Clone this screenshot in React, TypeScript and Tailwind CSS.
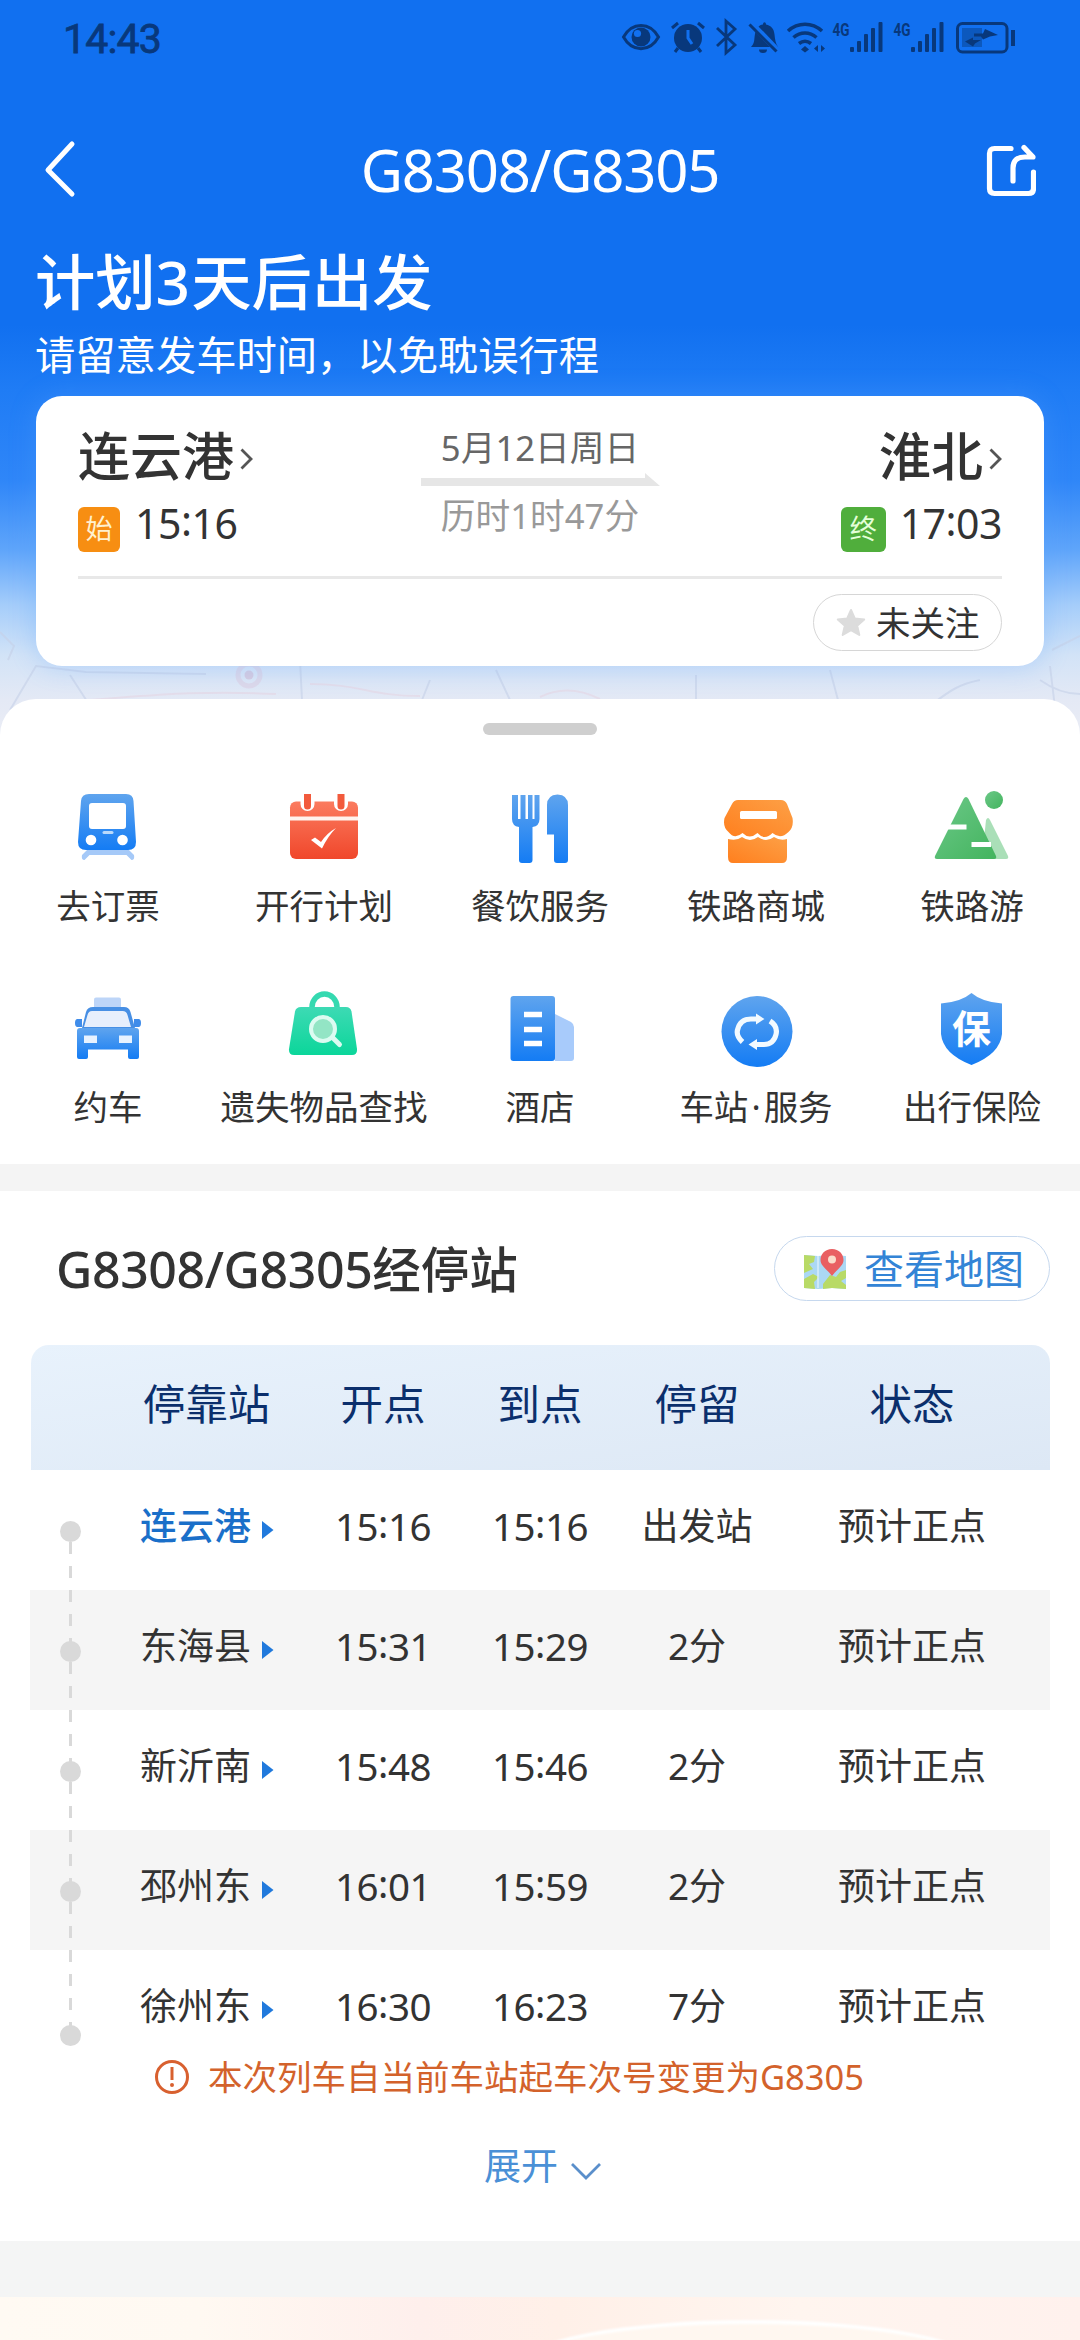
import React from "react";

type Children = { children: React.ReactNode };

/* Latin runs are tracked separately from the Chinese text around them. */
const N = ({ children, t = "tracking-[-0.02em]" }: Children & { t?: string }) => <span className={t}>{children}</span>;

/* A clock time whose colon is centred on the digits. */
const Time = ({ value }: { value: string }) => {
  const [h, m] = value.split(":");
  return (
    <span className="tracking-[-0.012em]">
      {h}
      <span className="inline-block -translate-y-[0.08em]">:</span>
      {m}
    </span>
  );
};

const INK = "#08387c";

const StatusBar = () => (
  <div className="flex h-[74px] items-center justify-between pr-[63px] pl-[63px]">
    <div className="mt-[5px] font-['Roboto'] text-[41px] leading-[41px] font-normal tracking-[-0.02em] text-[#08387c] [-webkit-text-stroke:0.8px_#08387c]">14:43</div>
    <svg className="h-[40px] w-[396px]" viewBox="622 17 396 40" fill="none" stroke={INK} strokeWidth="3">
      <path d="M624.500 37C633 21.500 651 21.500 659.500 37C651 52.500 633 52.500 624.500 37Z" />
      <circle cx="642" cy="37" r="9.500" fill={INK} stroke="none" />
      <circle cx="638.500" cy="33.500" r="3.600" fill="#1170f0" stroke="none" />
      <circle cx="689" cy="38" r="14" fill={INK} stroke="none" />
      <path d="M673 28l6-5M705 28l-6-5M679 48l-3 4M699 48l3 4" />
      <path d="M689 30v8l4 6" stroke="#1170f0" />
      <path d="M718 28l18 17-9 8V21l9 8-18 17" strokeWidth="2.800" />
      <path d="M752 47c4-4 3-8 4-13c1-6 4-9 8-9.500c0-3 3-3 3 0c5 1 8 4 8.500 10c.5 5 1 9 3.500 12.500zM760 49.500h8a4 3.500 0 0 1-8 0Z" fill={INK} stroke="none" />
      <path d="M752 23l28 29" stroke="#1170f0" strokeWidth="6" />
      <path d="M750.500 24.500l27 27" />
      <path d="M789 31c10-9 24-9 34 0M794.500 37.500c7-6 16-6 23 0M800 43.500c4-3 8-3 12 0" strokeWidth="3.600" />
      <path d="M806 46l4 3.500-4 3-4-3Z" fill={INK} stroke="none" />
      <path d="M819 45v7l-4-3.500zM822 45v7l4-3.500z" fill={INK} stroke="none" />
      {[851, 912].map((x) => (
        <g key={x} fill={INK} stroke="none">
          <text x={x - 17.500} y="35.500" fontFamily="Roboto" fontWeight="700" fontSize="17.500" textLength="17" lengthAdjust="spacingAndGlyphs">4G</text>
          <rect x={x} y="47" width="4" height="5" rx="1" />
          <rect x={x + 7} y="41" width="4" height="11" rx="1" />
          <rect x={x + 14} y="34" width="4" height="18" rx="1" />
          <rect x={x + 21} y="28" width="4" height="24" rx="1" />
          <rect x={x + 28.500} y="22" width="4" height="30" rx="1" />
        </g>
      ))}
      <rect x="958.500" y="23.500" width="49.500" height="28.500" rx="5" />
      <rect x="963" y="28" width="20" height="19" fill="#0c58bd" stroke="none" />
      <path d="M975 33.500h9l2-4.500 13 6-8 1.500-7 3-2-3h-7zM966 41.500l8-4v2.500h8l-6 3.500-2 3z" fill={INK} stroke="none" />
      <path d="M1014 30v16" strokeWidth="4" />
    </svg>
  </div>
);

const NavBar = () => (
  <div className="mt-[60px] flex h-[72px] items-center justify-between px-[44px]">
    <svg className="h-[60px] w-[50px]" viewBox="0 0 50 60" fill="none" stroke="#fff" strokeWidth="5" strokeLinecap="round" strokeLinejoin="round">
      <path d="M28 4L4 30l24 24" />
    </svg>
    <h1 className="text-[58px] leading-[72px] tracking-[-0.02em] text-white">G8308/G8305</h1>
    <svg className="h-[54px] w-[50px]" viewBox="0 0 50 54" fill="none" stroke="#fff" strokeWidth="5.200" strokeLinecap="round" strokeLinejoin="round">
      <path d="M25 5.500H8.500Q3.500 5.500 3.500 10.500v35q0 5 5 5h34q5 0 5-5V29" />
      <path d="M27 38V25q0-11 12-11h8L38 4.500" />
    </svg>
  </div>
);

const Chevron = () => (
  <svg className="mt-[6px] ml-[6px] h-[22px] w-[13px]" viewBox="0 0 13 22" fill="none" stroke="#555" strokeWidth="2.800">
    <path d="M1.500 1.500L11 11l-9.500 9.500" />
  </svg>
);

const TripCard = () => (
  <div className="relative mx-9 mt-[19px] flex h-[270px] flex-col rounded-[26px] bg-white px-[42px] pt-[30px] shadow-[0_0_24px_2px_rgba(90,160,255,0.28)]">
    <div className="grid grid-cols-[1fr_239px_1fr]">
      <div>
        <div className="flex h-[60px] items-center text-[52px] leading-[60px] font-medium text-[#333]">
          连云港
          <Chevron />
        </div>
        <div className="mt-[21px] flex items-start">
          <div className="flex h-[45px] w-[42px] items-center justify-center rounded-[6px] bg-[#f78e12] text-[27px] text-[#fff1cf]">始</div>
          <div className="ml-[15px] text-[41px] leading-[33px] text-[#333]"><Time value="15:16" /></div>
        </div>
      </div>
      <div className="flex flex-col items-center">
        <div className="mt-[2px] text-[34.700px] leading-[40px] whitespace-nowrap text-[#666]"><N t="tracking-normal">5</N>月<N t="tracking-normal">12</N>日周日</div>
        <svg className="mt-[5px] h-[13px] w-[239px]" viewBox="0 0 239 13" fill="#e6e6e6">
          <path d="M0 5h224V0l15 13H0z" />
        </svg>
        <div className="mt-[10px] text-[34.700px] leading-[40px] whitespace-nowrap text-[#999]">历时<N t="tracking-normal">1</N>时<N t="tracking-normal">47</N>分</div>
      </div>
      <div className="flex flex-col items-end">
        <div className="flex h-[60px] items-center text-[52px] leading-[60px] font-medium text-[#333]">
          淮北
          <Chevron />
        </div>
        <div className="mt-[21px] flex items-start">
          <div className="flex h-[45px] w-[45px] items-center justify-center rounded-[6px] bg-[#50ae3c] text-[27px] text-[#e4ffd9]">终</div>
          <div className="ml-[14px] text-[41px] leading-[33px] text-[#333]"><Time value="17:03" /></div>
        </div>
      </div>
    </div>
    <div className="mt-[24px] h-[3px] bg-[#e8e8e8]" />
    <div className="mt-[15px] flex h-[57px] w-[189px] items-center self-end rounded-full border-[1.500px] border-[#d6d6d6] pl-[22px]">
      <svg className="h-[30px] w-[30px]" viewBox="0 0 30 30" fill="#dcdcdc" stroke="#dcdcdc" strokeWidth="2" strokeLinejoin="round">
        <path d="M15 2l3.900 8.600 9.300.9-7 6.200 2.100 9.300L15 22.200 6.700 27l2.100-9.300-7-6.200 9.300-.9z" />
      </svg>
      <span className="ml-[10px] text-[34.500px] leading-[40px] text-[#333]">未关注</span>
    </div>
  </div>
);

const MapLines = () => (
  <svg className="absolute top-[600px] left-0 h-[140px] w-[1080px] opacity-60" viewBox="0 600 1080 140" fill="none" strokeWidth="2">
    <path d="M10 710l26-44 50 6 120 2M70 675l22 34M0 632l14 14-6 14M300 660l2 40M430 680l-8 20M496 670l14 30M696 675v26M830 670l8 30" stroke="#c6d1e8" />
    <path d="M86 700c60-4 110-10 190-6M310 684c50 0 60 12 110 12M540 697c20-10 40-8 60 2" stroke="#e5d6e4" />
    <path d="M930 706c20-16 30-22 50-26M1052 650l28-14M1040 680c14 10 26 14 40 14M1050 666l6 50" stroke="#c6d1e8" />
    <circle cx="249" cy="675" r="11" stroke="#dccfe3" strokeWidth="5" />
    <circle cx="249" cy="675" r="4.500" fill="#d3bcd4" />
  </svg>
);

const Defs = () => (
  <svg className="absolute h-0 w-0">
    <defs>
      <linearGradient id="blue" x1="0" y1="0" x2="0" y2="1"><stop offset="0" stopColor="#5fa4ee" /><stop offset="1" stopColor="#147cf4" /></linearGradient>
      <linearGradient id="red" x1="0" y1="0" x2="0" y2="1"><stop offset="0" stopColor="#fb7b5f" /><stop offset="1" stopColor="#f0472b" /></linearGradient>
      <linearGradient id="orange" x1="0" y1="1" x2="1" y2="0"><stop offset="0" stopColor="#ff7f1e" /><stop offset="1" stopColor="#fda046" /></linearGradient>
      <linearGradient id="green" x1="0" y1="0" x2="1" y2="1"><stop offset="0" stopColor="#6cc888" /><stop offset="1" stopColor="#43b45e" /></linearGradient>
      <linearGradient id="mint" x1="0" y1="0" x2="0" y2="1"><stop offset="0" stopColor="#3ddab4" /><stop offset="1" stopColor="#0bd69a" /></linearGradient>
    </defs>
  </svg>
);

const TrainIcon = () => (
  <>
    <path d="M20 63l-6 6q-1 5 2.500 5l5-5h37l5 5q3.500 0 2.500-5l-6-6z" fill="#a5c9f8" />
    <path d="M21 8h37q7 0 7.500 7L68 56q0 8-8 8H18q-8 0-8-8l3-41q.500-7 8-7z" fill="url(#blue)" />
    <rect x="21" y="17" width="37" height="26" rx="3" fill="#fff" />
    <rect x="34.500" y="45" width="11" height="3" rx="1.500" fill="#b9d9fb" />
    <circle cx="23" cy="54" r="5.300" fill="#fff" />
    <circle cx="54.500" cy="54" r="5.300" fill="#fff" />
  </>
);
const CalendarIcon = () => (
  <>
    <rect x="6" y="15.500" width="68" height="57.500" rx="6" fill="url(#red)" />
    <path d="M6 32.500h68" stroke="#fff3ee" strokeWidth="4" />
    <path d="M17.500 10v8a6 6 0 0 0 12 0v-8M51 10v8a6 6 0 0 0 12 0v-8" fill="#fff" stroke="#fff" strokeWidth="2" />
    <path d="M20 8h7v12a3.500 3.500 0 0 1-7 0zM53.500 8h7v12a3.500 3.500 0 0 1-7 0z" fill="#f25a3c" />
    <path d="M27 54l4-2.500 6 4.500q6-9 15-14-8 8-14 20.500z" fill="#fff" />
  </>
);
const DiningIcon = () => (
  <>
    <path d="M12 9h6v24h2.500V9h5v24h2.500V9h4.500v24h2V9h5v24q0 7-7 8v33q0 3-3 3h-7.500q-3 0-3-3V41q-7-1-7-8z" fill="url(#blue)" />
    <path d="M47 19q0-10 10.500-10.500Q68 9 68 19v55q0 3-3 3h-8q-3 0-3-3V48.500h-7z" fill="url(#blue)" />
  </>
);
const ShopIcon = () => (
  <>
    <path d="M22 14h43q4 0 6 4l5.500 14q1.500 9-4 14-8 8-16 1-8 8-15 0-8 7-15 0-8 7-14-1-6-5-4-14L16 18q2-4 6-4z" fill="url(#orange)" />
    <path d="M12 53q9 2 14-2 8 6 16 0 8 6 16 0 6 4 13 2v18q0 6-5 6H17q-5 0-5-6z" fill="url(#orange)" />
    <rect x="24" y="25" width="37" height="8" rx="1.500" fill="#fff" />
  </>
);
const MountainIcon = () => (
  <>
    <path d="M54 34q2-4 4 0l18 36q1 3-2 3H50z" fill="#aadfb8" />
    <path d="M31.500 13q2.500-4 5 0L64 70q1 3-2 3H5q-3 0-2-3z" fill="url(#green)" />
    <circle cx="62" cy="14" r="9" fill="url(#green)" />
    <path d="M14 41h20.500M39.500 58.500H59" stroke="#fff" strokeWidth="4.800" />
  </>
);
const TaxiIcon = () => (
  <>
    <rect x="26" y="9.500" width="27" height="12" rx="2" fill="#bdd5f8" />
    <path d="M25 19h31q5 0 6.500 5l4.500 16H14l4-16q1.500-5 7-5z" fill="#478fe4" />
    <path d="M24 23h30.500q4 0 5 4l3.500 12H16l3.500-12q1-4 4.500-4z" fill="#e7effc" />
    <path d="M9.500 31H14v8H9.500Q7 39 7 35t2.500-4zM66 31h4.500Q73 31 73 35t-2.500 4H66z" fill="#3f8cea" />
    <path d="M9 43q0-3 3-3h56q3 0 3 3v26q0 2-2 2h-7q-2 0-2-2v-7.500H20V69q0 2-2 2h-7q-2 0-2-2z" fill="url(#blue)" />
    <path d="M16 47.500h13V55H16zM51 47.500h13V55H51z" fill="#e7f2ff" />
  </>
);
const BagIcon = () => (
  <>
    <path d="M28 24v-5a12.500 13 0 0 1 25 0v5" fill="none" stroke="#35d9b0" strokeWidth="5.500" />
    <path d="M17 19h45q4.500 0 5.500 4.500L73 61q.500 6-5 6H10q-5.500 0-5-6l6-37.500q1-4.500 6-4.500z" fill="url(#mint)" />
    <path d="M48 49l7.500 7.500" stroke="#dcfbf1" strokeWidth="5" strokeLinecap="round" />
    <circle cx="39" cy="41" r="12" fill="#93e5c5" stroke="#dcfbf1" strokeWidth="4" />
  </>
);
const HotelIcon = () => (
  <>
    <path d="M55 26l16 8q3 2 3 5v31q0 3-3 3H55z" fill="#a8cbfb" />
    <rect x="10.500" y="8" width="44.500" height="65" rx="3" fill="url(#blue)" />
    <path d="M24 26.500h18M24 41.500h18M24 55.500h18" stroke="#fff" strokeWidth="5.400" />
  </>
);
const StationIcon = () => (
  <>
    <circle cx="41" cy="43.500" r="35.500" fill="url(#blue)" />
    <path d="M26.500 54Q20 48 21.500 42 24 31 35 31h6M54 33q8 5 6 13.500-2.500 10-12 10h-7" fill="none" stroke="#f3faff" strokeWidth="5.200" />
    <path d="M40 25.500l8.500 5.500-8.500 5.500zM41 51l-8.500 5.500 8.500 5.500z" fill="#f3faff" />
  </>
);
const InsuranceIcon = () => (
  <>
    <path d="M39.500 5Q50 14 70 15.500V46Q68 66 39.500 77 11 66 9 46V15.500Q29 14 39.500 5z" fill="url(#blue)" />
    <text x="39.500" y="55" textAnchor="middle" fontFamily="'Noto Sans CJK SC', sans-serif" fontWeight="700" fontSize="39" fill="#fff">保</text>
  </>
);

const services = [
  [
    { label: "去订票", icon: <TrainIcon /> },
    { label: "开行计划", icon: <CalendarIcon /> },
    { label: "餐饮服务", icon: <DiningIcon /> },
    { label: "铁路商城", icon: <ShopIcon /> },
    { label: "铁路游", icon: <MountainIcon /> },
  ],
  [
    { label: "约车", icon: <TaxiIcon /> },
    { label: "遗失物品查找", icon: <BagIcon /> },
    { label: "酒店", icon: <HotelIcon /> },
    { label: "车站·服务", icon: <StationIcon /> },
    { label: "出行保险", icon: <InsuranceIcon /> },
  ],
];

const Services = () => (
  <div className="mt-[51px] flex flex-col gap-[61px]">
    {services.map((row, i) => (
      <div key={i} className="grid grid-cols-5">
        {row.map((s) => {
          const [head, tail] = s.label.split("·");
          return (
            <div key={s.label} className="flex flex-col items-center">
              <svg className="h-[80px] w-[80px]" viewBox={i === 0 ? "0 0 80 80" : "0 -1 80 80"}>{s.icon}</svg>
              <div className="mt-[20px] text-[34.500px] leading-[40px] whitespace-nowrap text-[#333]">
                {head}
                {tail && <span className="px-[3px]">·</span>}
                {tail}
              </div>
            </div>
          );
        })}
      </div>
    ))}
  </div>
);

const stops = [
  { name: "连云港", dep: "15:16", arr: "15:16", num: "", stay: "出发站" },
  { name: "东海县", dep: "15:31", arr: "15:29", num: "2", stay: "分" },
  { name: "新沂南", dep: "15:48", arr: "15:46", num: "2", stay: "分" },
  { name: "邳州东", dep: "16:01", arr: "15:59", num: "2", stay: "分" },
  { name: "徐州东", dep: "16:30", arr: "16:23", num: "7", stay: "分" },
];

const StopTable = () => (
  <div>
    <div className="mt-[44px] ml-[31px] grid h-[125px] w-[1019px] grid-cols-[96px_177px_158px_156px_158px_272px] rounded-t-[18px] bg-linear-to-br from-[#e8f2fc] to-[#dde8f5] text-center text-[42.500px] leading-[118px] text-[#0b2f6c]">
      <div />
      <div className="mr-[18px]">停靠站</div>
      <div>开点</div>
      <div>到点</div>
      <div>停留</div>
      <div>状态</div>
    </div>
    {stops.map((s, i) => {
      const last = i === stops.length - 1;
      return (
        <div key={s.name} className={`ml-[30px] grid w-[1020px] grid-cols-[97px_177px_158px_156px_158px_272px] ${last ? "h-[105px]" : "h-[120px]"} ${i % 2 ? "bg-[#f5f5f5]" : "bg-white"} text-center text-[37px] leading-[112px] text-[#333]`}>
          <svg className={`ml-[30px] w-[22px] ${last ? "h-[105px]" : "h-[120px]"}`} viewBox={last ? "0 0 22 105" : "0 0 22 120"}>
            <path d={i === 0 ? "M10.500 72V120" : last ? "M10.500 0V76" : "M10.500 0V120"} stroke="#d9d9d9" strokeWidth="3" strokeDasharray="12 12" />
            <circle cx="10.500" cy={last ? 85.500 : 61.500} r="10.500" fill="#d9d9d9" />
          </svg>
          <div className={`flex pl-[13px] text-left ${i === 0 ? "font-medium text-[#1a6fc9]" : ""}`}>
            {s.name}
            <svg className="mt-[51px] ml-[11px] h-[18px] w-[12px]" viewBox="0 0 12 18" fill="#2079dc"><path d="M0 0l11.500 9L0 18z" /></svg>
          </div>
          <div className="text-[38.500px]"><Time value={s.dep} /></div>
          <div className="text-[38.500px]"><Time value={s.arr} /></div>
          <div><N t="tracking-normal">{s.num}</N>{s.stay}</div>
          <div>预计正点</div>
        </div>
      );
    })}
  </div>
);

const MapIcon = () => (
  <svg className="h-[42px] w-[44px]" viewBox="0 0 44 42">
    <path d="M1 7l14 1 14-1 14 1v33l-14-1-14 1-14-1z" fill="#abd8f4" />
    <path d="M1 7l11 1-1 6-5 2 4 5-9 4zM1 31l9-5 6 3-5 5 1 7-11-1zM20 36l7-9 6 2 4-5 6-2v8l-5 3 5 4v4l-14-1-9 1z" fill="#b8da66" />
    <path d="M15 8v32" stroke="#d8eefb" strokeWidth="1.500" />
    <path d="M29 1c7 0 11.500 5 11.500 11C40.500 18 34 21 29 28c-5-7-11.500-10-11.500-16C17.500 6 22 1 29 1z" fill="#e95f62" />
    <circle cx="29" cy="11.500" r="4" fill="#fbdccb" />
  </svg>
);

export default function App() {
  return (
    <div className="relative flex h-[2340px] w-[1080px] flex-col overflow-hidden bg-[linear-gradient(180deg,#1170f0_0px,#1170f0_325px,#1f7cf5_390px,#2f86f8_480px,#5fa5fa_550px,#a5cdfa_605px,#d2e3f7_655px,#e4e9f5_700px,#ebedf5_740px)] font-['Noto_Sans','Noto_Sans_CJK_SC',sans-serif]">
      <Defs />
      <MapLines />
      <StatusBar />
      <NavBar />
      <h2 className="mt-[46px] ml-[35px] text-[60.300px] leading-[60px] font-medium text-white">计划<N t="tracking-[0.02em]">3</N>天后出发</h2>
      <p className="mt-[21px] ml-[35px] text-[40.300px] leading-[44px] text-white">请留意发车时间，以免耽误行程</p>
      <TripCard />
      <div className="relative mt-[33px] flex flex-col rounded-t-[36px] bg-white pt-[24px]">
        <div className="h-[12px] w-[114px] self-center rounded-full bg-[#cfcfcf]" />
        <Services />
        <div className="mt-[37px] h-[27px] bg-[#f4f4f4]" />
        <div className="mt-[45px] flex h-[65px] items-center justify-between pr-[30px] pl-[56px]">
          <h3 className="text-[48.500px] leading-[60px] font-medium whitespace-nowrap text-[#333]"><N t="text-[50px] tracking-[-0.008em]">G8308/G8305</N>经停站</h3>
          <div className="flex h-[65px] w-[276px] items-center rounded-full border-[1.500px] border-[#c6d8ee] pl-[28px]">
            <MapIcon />
            <span className="ml-[17px] text-[40px] leading-[60px] text-[#3384d6]">查看地图</span>
          </div>
        </div>
        <StopTable />
        <div className="mt-[2px] flex h-[40px] items-center pl-[154px] text-[34.500px] leading-[40px] text-[#d3622b]">
          <svg className="h-[36px] w-[36px]" viewBox="0 0 36 36" fill="none" stroke="#d8602f" strokeWidth="3">
            <circle cx="18" cy="18" r="15.500" />
            <path d="M18 8v13" />
            <circle cx="18" cy="26" r="1" strokeWidth="2" />
          </svg>
          <span className="ml-[18px]">本次列车自当前车站起车次号变更为<N t="tracking-normal">G8305</N></span>
        </div>
        <div className="mt-[48px] flex h-[42px] items-center pl-[484px] text-[37px] leading-[42px] text-[#4a90d6]">
          展开
          <svg className="mt-[9px] ml-[12px] h-[20px] w-[32px]" viewBox="0 0 32 20" fill="none" stroke="#5a8fcb" strokeWidth="2.800"><path d="M2 3l14 14L30 3" /></svg>
        </div>
      </div>
      <div className="h-[54px] bg-white" />
      <div className="h-[56px] bg-[#f4f5f5]" />
      <div className="relative h-[43px] overflow-hidden bg-[linear-gradient(90deg,#fffaf3_0px,#fff9f2_200px,#feefec_420px,#fff0e8_560px,#fff5ef_800px,#fff1ed_1080px)]">
        <div className="absolute top-[23px] left-[520px] h-[90px] w-[460px] rounded-[50%] border-[4px] border-white bg-[#fff7f0] blur-[1px]" />
      </div>
    </div>
  );
}
